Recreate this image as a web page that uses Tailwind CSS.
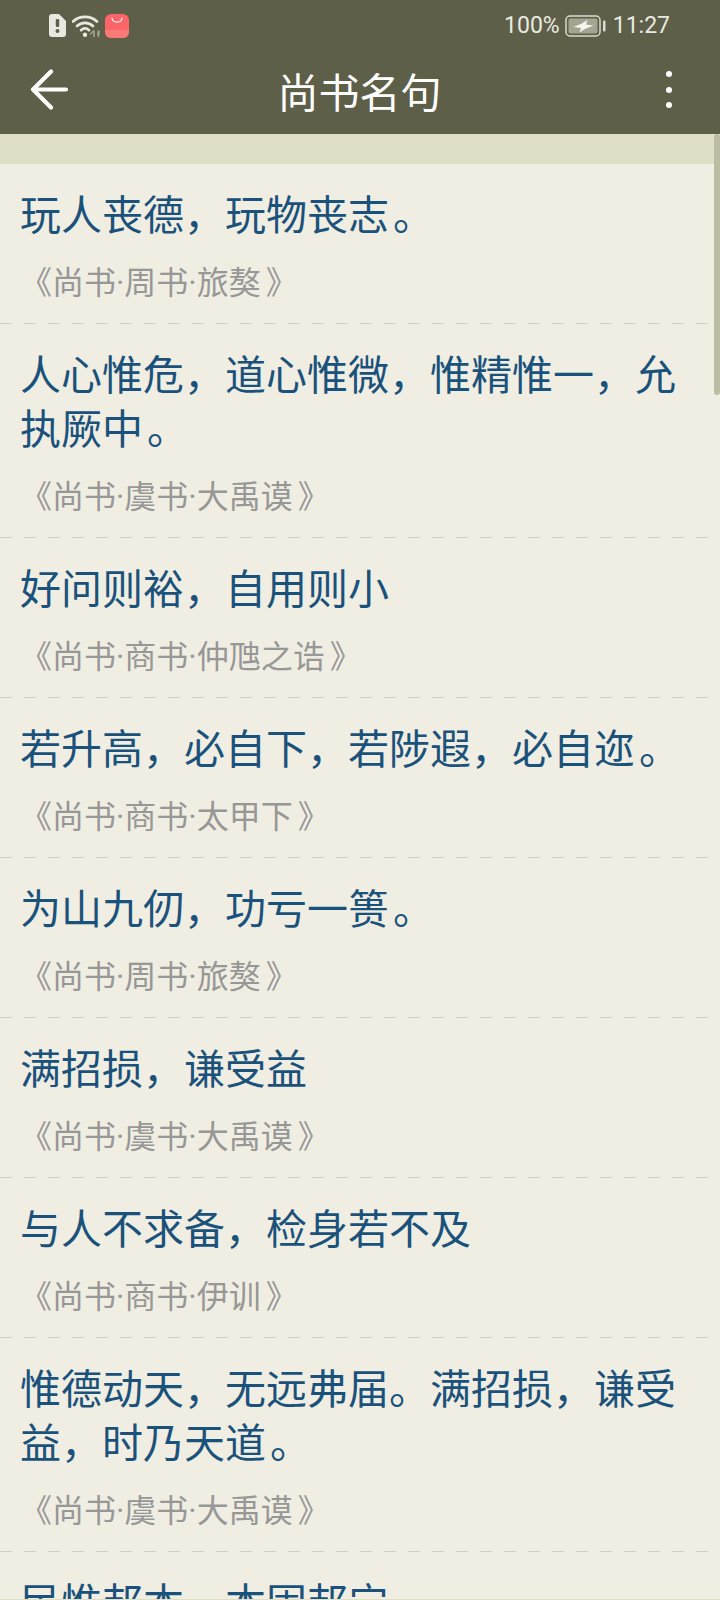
<!DOCTYPE html>
<html lang="zh">
<head>
  <meta charset="UTF-8">
  <title>尚书名句</title>
  <script src="https://cdn.jsdelivr.net/npm/@tailwindcss/browser@4"></script>
</head>
<body class="bg-[#f0eee2] font-['Noto_Sans_CJK_SC','Noto_Sans',sans-serif]">
  <div class="relative w-[720px] h-[1600px] overflow-hidden">
    <!-- status bar -->
    <div class="h-[50px] bg-[#5e5f48] flex items-center justify-between pl-[49px] pr-[50px] pt-[1px]">
      <div class="flex items-center">
        <svg class="w-[17px] h-[23px]" viewBox="0 0 17 23">
          <path d="M3 0h7l7 7v13a3 3 0 0 1-3 3H3a3 3 0 0 1-3-3V3a3 3 0 0 1 3-3z" fill="#e9e9e1"/>
          <rect x="6.800" y="5" width="3.400" height="8" rx="1.200" fill="#5e5f48"/>
          <circle cx="8.500" cy="17" r="2" fill="#5e5f48"/>
        </svg>
        <svg class="w-[28px] h-[24px] ml-[6px]" viewBox="0 0 28 24" fill="none" stroke="#e9e9e1" stroke-width="2.600" stroke-linecap="round">
          <path d="M1 7.500C7.500 1.300 18.500 1.300 25 7.500"/>
          <path d="M5 12C9.500 7.800 16.500 7.800 21 12"/>
          <path d="M9 16.200C11.500 14 14.500 14 17 16.200"/>
          <circle cx="13" cy="20.800" r="2.200" fill="#e9e9e1" stroke="none"/>
          <path d="M22 17v5.500M26.500 17v5.500" stroke="#a5a594" stroke-width="1.600"/>
          <path d="M18.500 20l3-3M25.500 20l2-2" stroke="#a5a594" stroke-width="1.200"/>
        </svg>
        <div class="relative w-[24px] h-[24px] ml-[5px] rounded-[6px] bg-[#fb6468] overflow-hidden">
          <div class="absolute left-0 right-0 bottom-0 h-[8px] bg-[#fa7a78]"></div>
          <svg class="absolute left-[6px] top-[3px] w-[12px] h-[7px]" viewBox="0 0 12 7" fill="none" stroke="#fff" stroke-width="1.100" stroke-linecap="round">
            <path d="M1 1c.5 5.500 9.500 5.500 10 0"/>
          </svg>
        </div>
      </div>
      <div class="flex items-center text-[#e9e9e1] font-['Roboto',sans-serif] text-[23px] leading-[26px]">
        <span>100%</span>
        <svg class="w-[41px] h-[22px] ml-[5px]" viewBox="0 0 41 22">
          <rect x="1" y="1" width="34" height="20" rx="4" fill="none" stroke="#dcdcd0" stroke-width="1.500"/>
          <rect x="3.500" y="3.500" width="29" height="15" rx="2" fill="#a3a491"/>
          <path d="M8.500 12l8.500-3.500 5.500-3.500-1.500 4.500 7.500 1-8.500 3.500-5.500 3.500 1.500-4.500z" fill="#f6f6ee"/>
          <rect x="38" y="5.500" width="2.500" height="11" rx="1" fill="#dcdcd0"/>
        </svg>
        <span class="ml-[7px]">11:27</span>
      </div>
    </div>
    <!-- toolbar -->
    <div class="relative h-[84px] bg-[#5e5f48] flex items-center justify-center pr-[1px]">
      <svg class="absolute left-[30px] top-[19px] w-[39px] h-[41px]" viewBox="0 0 39 41" fill="none" stroke="#fff" stroke-width="4.200" stroke-linecap="round" stroke-linejoin="round">
        <path d="M21 2.500L3 20.500l18 18M3 20.500h33"/>
      </svg>
      <h1 class="text-[#fff] text-[41px] leading-[56px] font-normal mt-[-4px]">尚书名句</h1>
      <div class="absolute left-[666px] top-[21px] flex flex-col gap-[9.500px]">
        <div class="w-[6px] h-[6px] rounded-full bg-white"></div>
        <div class="w-[6px] h-[6px] rounded-full bg-white"></div>
        <div class="w-[6px] h-[6px] rounded-full bg-white"></div>
      </div>
    </div>
    <div class="h-[30px] bg-[#dfdfc6]"></div>
    <!-- list -->
    <div id="list">
      <div class="h-[159px] pl-[20px] pr-[20px] pt-[21px]">
        <p class="text-[41px] leading-[54px] text-[#1b527c]">玩人丧德，玩物丧志<span class="ml-[4px]">。</span></p>
        <p class="font-['Roboto','Noto_Sans_CJK_SC',sans-serif] text-[32px] leading-[46px] mt-[21px] text-[#979797]">《尚书·周书·旅獒<span class="ml-[5px]">》</span></p>
      </div>
      <div class="h-[1px] bg-[repeating-linear-gradient(90deg,#cfcfc6_0,#cfcfc6_12px,transparent_12px,transparent_24px)]"></div>
      <div class="h-[213px] pl-[20px] pr-[20px] pt-[21px]">
        <p class="text-[41px] leading-[54px] text-[#1b527c]">人心惟危，道心惟微，惟精惟一，允执厥中<span class="ml-[4px]">。</span></p>
        <p class="font-['Roboto','Noto_Sans_CJK_SC',sans-serif] text-[32px] leading-[46px] mt-[21px] text-[#979797]">《尚书·虞书·大禹谟<span class="ml-[5px]">》</span></p>
      </div>
      <div class="h-[1px] bg-[repeating-linear-gradient(90deg,#cfcfc6_0,#cfcfc6_12px,transparent_12px,transparent_24px)]"></div>
      <div class="h-[159px] pl-[20px] pr-[20px] pt-[21px]">
        <p class="text-[41px] leading-[54px] text-[#1b527c]">好问则裕，自用则小</p>
        <p class="font-['Roboto','Noto_Sans_CJK_SC',sans-serif] text-[32px] leading-[46px] mt-[21px] text-[#979797]">《尚书·商书·仲虺之诰<span class="ml-[5px]">》</span></p>
      </div>
      <div class="h-[1px] bg-[repeating-linear-gradient(90deg,#cfcfc6_0,#cfcfc6_12px,transparent_12px,transparent_24px)]"></div>
      <div class="h-[159px] pl-[20px] pr-[20px] pt-[21px]">
        <p class="text-[41px] leading-[54px] text-[#1b527c]">若升高，必自下，若陟遐，必自迩<span class="ml-[4px]">。</span></p>
        <p class="font-['Roboto','Noto_Sans_CJK_SC',sans-serif] text-[32px] leading-[46px] mt-[21px] text-[#979797]">《尚书·商书·太甲下<span class="ml-[5px]">》</span></p>
      </div>
      <div class="h-[1px] bg-[repeating-linear-gradient(90deg,#cfcfc6_0,#cfcfc6_12px,transparent_12px,transparent_24px)]"></div>
      <div class="h-[159px] pl-[20px] pr-[20px] pt-[21px]">
        <p class="text-[41px] leading-[54px] text-[#1b527c]">为山九仞，功亏一篑<span class="ml-[4px]">。</span></p>
        <p class="font-['Roboto','Noto_Sans_CJK_SC',sans-serif] text-[32px] leading-[46px] mt-[21px] text-[#979797]">《尚书·周书·旅獒<span class="ml-[5px]">》</span></p>
      </div>
      <div class="h-[1px] bg-[repeating-linear-gradient(90deg,#cfcfc6_0,#cfcfc6_12px,transparent_12px,transparent_24px)]"></div>
      <div class="h-[159px] pl-[20px] pr-[20px] pt-[21px]">
        <p class="text-[41px] leading-[54px] text-[#1b527c]">满招损，谦受益</p>
        <p class="font-['Roboto','Noto_Sans_CJK_SC',sans-serif] text-[32px] leading-[46px] mt-[21px] text-[#979797]">《尚书·虞书·大禹谟<span class="ml-[5px]">》</span></p>
      </div>
      <div class="h-[1px] bg-[repeating-linear-gradient(90deg,#cfcfc6_0,#cfcfc6_12px,transparent_12px,transparent_24px)]"></div>
      <div class="h-[159px] pl-[20px] pr-[20px] pt-[21px]">
        <p class="text-[41px] leading-[54px] text-[#1b527c]">与人不求备，检身若不及</p>
        <p class="font-['Roboto','Noto_Sans_CJK_SC',sans-serif] text-[32px] leading-[46px] mt-[21px] text-[#979797]">《尚书·商书·伊训<span class="ml-[5px]">》</span></p>
      </div>
      <div class="h-[1px] bg-[repeating-linear-gradient(90deg,#cfcfc6_0,#cfcfc6_12px,transparent_12px,transparent_24px)]"></div>
      <div class="h-[213px] pl-[20px] pr-[20px] pt-[21px]">
        <p class="text-[41px] leading-[54px] text-[#1b527c]">惟德动天，无远弗届。满招损，谦受益，时乃天道<span class="ml-[4px]">。</span></p>
        <p class="font-['Roboto','Noto_Sans_CJK_SC',sans-serif] text-[32px] leading-[46px] mt-[21px] text-[#979797]">《尚书·虞书·大禹谟<span class="ml-[5px]">》</span></p>
      </div>
      <div class="h-[1px] bg-[repeating-linear-gradient(90deg,#cfcfc6_0,#cfcfc6_12px,transparent_12px,transparent_24px)]"></div>
      <div class="pl-[20px] pr-[20px] pt-[21px]">
        <p class="text-[41px] leading-[54px] text-[#1b527c]">民惟邦本，本固邦宁</p>
      </div>
    </div>
    <!-- scrollbar -->
    <div class="absolute right-0 top-[134px] w-[6px] h-[261px] rounded-[3px] bg-[#bcbca2]"></div>
    <div class="absolute left-0 right-0 bottom-0 h-[1px] bg-[#dfdfc6]"></div>
  </div>
</body>
</html>
